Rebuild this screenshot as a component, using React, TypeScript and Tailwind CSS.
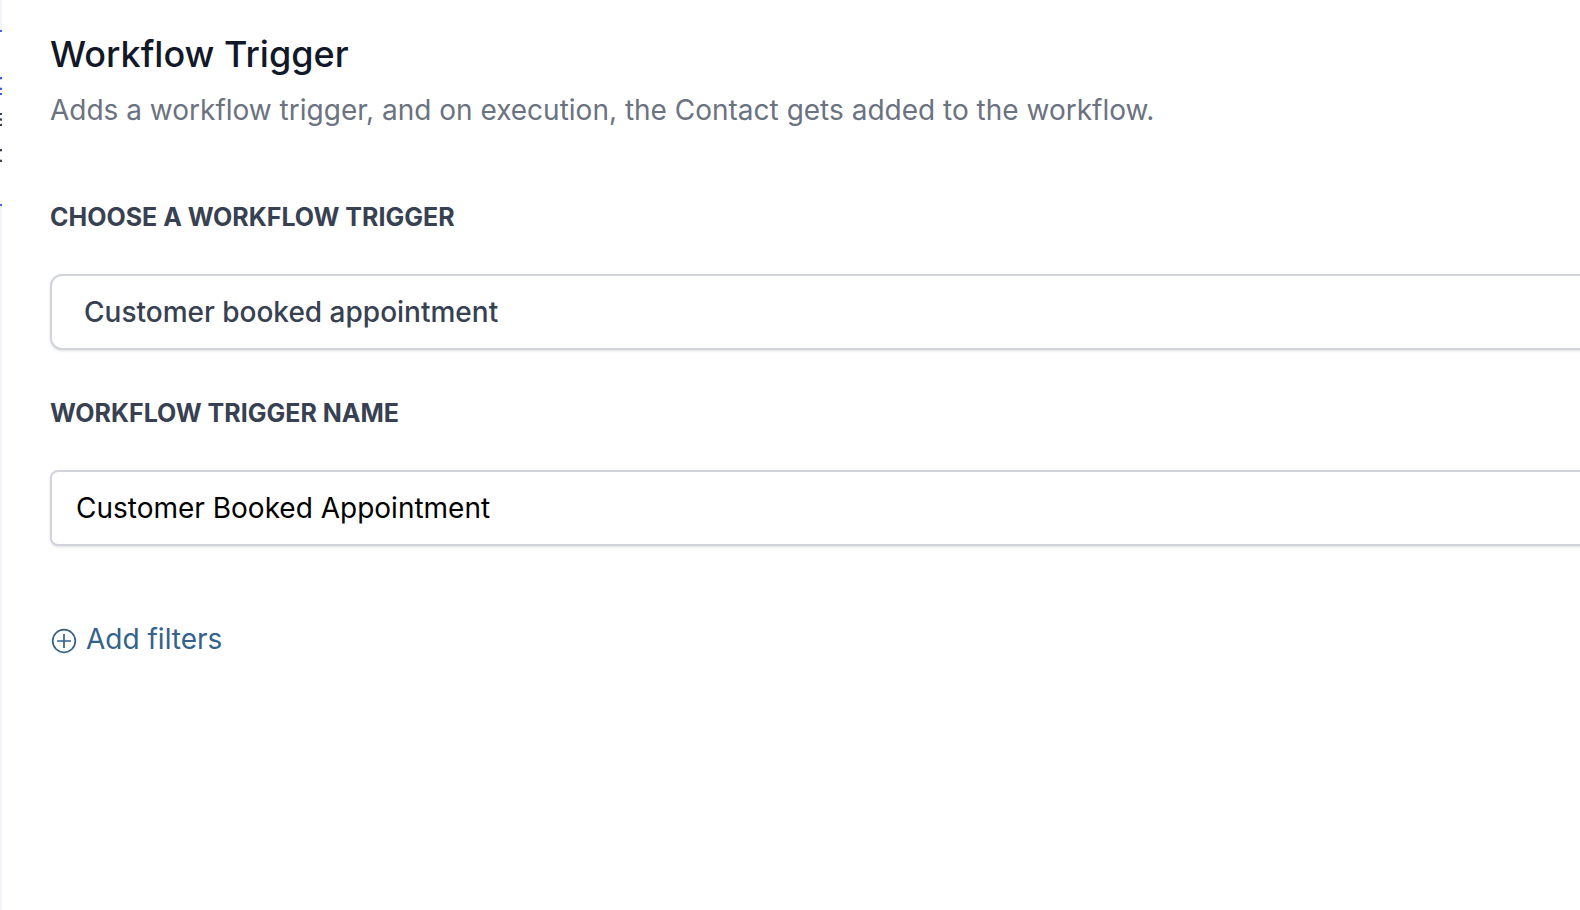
import { useState } from 'react';

const triggers = [
  'Customer booked appointment',
  'Appointment status',
  'Contact created',
  'Form submitted',
];

// Edge of the workflow canvas that stays visible beside the panel
const CanvasEdge = () => {
  return (
    <div className="w-0.5 shrink-0 overflow-hidden bg-[#f3f3fa] pt-[30px]" aria-hidden="true">
      <div className="h-44 border-y-2 border-[#3b66ea] bg-white pt-8 text-2xl leading-9 text-[#374151] shadow-md">
        <div className="-ml-1.5 font-medium">
          <p className="text-[#2f5ce0]">g</p>
          <p>s</p>
          <p>o</p>
        </div>
      </div>
    </div>
  );
};

const AddIcon = () => {
  return (
    <svg className="mt-1 size-7" viewBox="0 0 28 28" fill="none" stroke="currentColor" strokeWidth="1.7">
      <circle cx="14" cy="14" r="11.3" />
      <path d="M14 7v14M7 14h14" />
    </svg>
  );
};

const App = () => {
  const [trigger, setTrigger] = useState(triggers[0]);
  const [name, setName] = useState('Customer Booked Appointment');

  return (
    <div className="flex min-h-screen overflow-hidden bg-white font-['Inter',sans-serif]">
      <CanvasEdge />

      <main className="min-w-0 flex-1 pl-12 pt-[26px]">
        <h1 className="text-4xl leading-14 font-medium text-[#111827]">Workflow Trigger</h1>
        <p className="text-[28px] leading-14 text-[#6b7280]">
          Adds a workflow trigger, and on execution, the Contact gets added to the workflow.
        </p>

        {/* The fields run on past the right edge */}
        <form className="-mr-8 mt-16" onSubmit={(e) => e.preventDefault()}>
          <label htmlFor="trigger" className="block text-[25px] leading-[30px] font-bold text-[#374151] uppercase">
            Choose a workflow trigger
          </label>
          <select
            id="trigger"
            value={trigger}
            onChange={(e) => setTrigger(e.target.value)}
            className="mt-[42px] block h-[76px] w-full appearance-none rounded-xl border-2 border-[#d1d5db] bg-white px-8 text-[28px] font-medium text-[#374151] shadow-sm"
          >
            {triggers.map((item) => (
              <option key={item}>{item}</option>
            ))}
          </select>

          <label htmlFor="name" className="mt-12 block text-[25px] leading-[30px] font-bold text-[#374151] uppercase">
            Workflow trigger name
          </label>
          <input
            id="name"
            type="text"
            value={name}
            onChange={(e) => setName(e.target.value)}
            className="mt-[42px] block h-[76px] w-full rounded-lg border-2 border-[#d1d5db] bg-white px-6 text-[28px] text-black shadow-sm"
          />

          <button type="button" className="mt-18 flex items-center gap-2 text-[28px] leading-[42px] text-[#33628a]">
            <AddIcon />
            Add filters
          </button>
        </form>
      </main>
    </div>
  );
};

export default App;
